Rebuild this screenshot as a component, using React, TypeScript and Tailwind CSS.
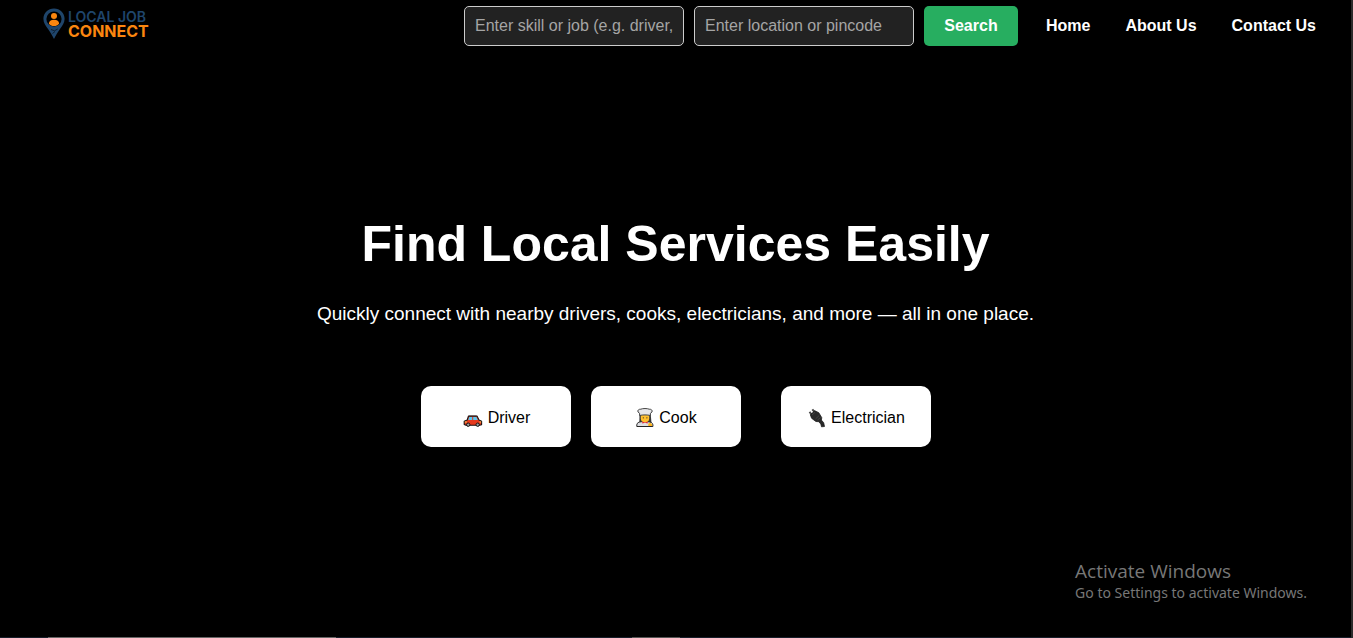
import type { ReactNode } from "react";

function PinMark() {
  return (
    <svg viewBox="0 0 22 32" className="h-8 w-[22px] shrink-0" aria-hidden="true">
      <path d="M11 0.500C5 .5.4 5 .4 10.800c0 4.200 2.300 7.200 4.800 10.400C7.300 24 9 27 11 31c2-4 3.700-7 5.800-9.800 2.500-3.200 4.800-6.200 4.800-10.400C21.600 5 17 .5 11 .5Z" fill="#1f456b" />
      <circle cx="11" cy="11" r="7.600" fill="#000" />
      <circle cx="11" cy="8" r="3" fill="#fb860f" />
      <path d="M5.900 15.800c0-2.800 2-4 5.100-4s5.100 1.200 5.100 4c-1.200 1.500-3 2.300-5.100 2.300s-3.900-.8-5.100-2.300Z" fill="#fb860f" />
      <path d="M8 21.500l3.500 1.300 3.200-1.800M9.500 25.500l2.500-2" fill="none" stroke="#0a1a2a" strokeWidth="0.9" />
    </svg>
  );
}

function CarIcon() {
  return (
    <svg viewBox="0 -7 20 20" className="size-5" aria-hidden="true">
      <path d="M5.500 1h8.500l2 4 2.600 1.200v3.600l-2 .5H3L1.200 9.500V6.200L4.200 5Z" fill="#e6391d" stroke="#1c1211" strokeWidth="1.100" strokeLinejoin="round" />
      <path d="M6.200 2h3v3H5.300ZM10.200 2h3.200l1.400 3h-4.600Z" fill="#5cc5ee" />
      <path d="M6 1.200h7.500" stroke="#3b2422" strokeWidth="1" />
      <path d="M1.800 7h2M16.500 7h1.700" stroke="#ffd35a" strokeWidth="1" />
      <circle cx="5.200" cy="9.700" r="1.700" fill="#9a9a9a" stroke="#151515" />
      <circle cx="14.700" cy="9.700" r="1.700" fill="#9a9a9a" stroke="#151515" />
    </svg>
  );
}

function CookIcon() {
  return (
    <svg viewBox="0 0 18 20" className="h-5 w-[18px]" aria-hidden="true">
      <path d="M3.500 6.500h11.200l.9 9H3.300Z" fill="#3a3a3a" />
      <path d="M.8 18.500v-1.600c0-2 2-3 4.700-3.200h6.500c2.800.2 4.900 1.200 4.900 3.200v1.600Z" fill="#dedee2" stroke="#242424" strokeWidth="1" />
      <path d="M4.800 6.500h8.400v4c0 2.400-1.900 4-4.200 4s-4.200-1.600-4.200-4Z" fill="#ffc02e" />
      <circle cx="7.300" cy="9.800" r=".6" fill="#392a16" />
      <circle cx="10.900" cy="9.800" r=".6" fill="#392a16" />
      <path d="M6.300 13.500l2.700.9 2.700-.9v1.900l-2.700-.6-2.700.6Z" fill="#e0263a" />
      <path d="M3.600 7.500V5.300L2 4C1.200 2.200 3 1 4.800 1.200 6.500.3 11.500.3 13.200 1.200c1.800-.2 3.600 1 2.800 2.800l-1.600 1.300v2.200c-3-.8-7.800-.8-10.800 0Z" fill="#e6e6e8" stroke="#333" strokeWidth=".9" strokeLinejoin="round" />
      <path d="M12.300 18v-2.500l1.800-.8 2 1.500V18Z" fill="#ffb61c" />
    </svg>
  );
}

function PlugIcon() {
  return (
    <svg viewBox="0 0 18 20" className="h-5 w-[18px]" aria-hidden="true">
      <path d="M1.500 3.800L4 7M4.300 1.300L7 4.500" stroke="#4d4d4d" strokeWidth="2" />
      <path d="M2.300 6.800L6.800 2.700l4 2 3 5-.4 2.400 2.300 2.600.8 3.800-3 .3-.7-2.800-2.100-2.300-2.800-.2-4.300-3.200Z" fill="#292929" stroke="#111" strokeWidth=".7" />
      <path d="M4 7L7 4.300M7.500 11l3.700-3.500M9.500 12l3-2.500" stroke="#555" strokeWidth=".6" />
    </svg>
  );
}

function ServiceButton({ icon, label }: { icon: ReactNode; label: string }) {
  return (
    <button type="button" className="flex h-[61px] w-[150px] items-center justify-center gap-[5px] rounded-[10px] bg-white pt-0.5 pl-0.5 text-base text-black">
      {icon}
      <span>{label}</span>
    </button>
  );
}

const links = ["Home", "About Us", "Contact Us"];
const field =
  "h-10 w-[220px] rounded-[5px] border border-[#ccc] bg-[#222] px-2.5 text-base text-white placeholder:text-[#a5a5a5]";

export default function App() {
  return (
    <div className="relative flex min-h-screen flex-col border-r-2 border-[#2b2b2b] bg-black font-['Liberation_Sans',Arial,sans-serif] text-white">
      <header className="flex items-start justify-between pt-1.5 pr-[35px] pb-1.5 pl-[43px]">
        <a href="#home" className="flex items-center gap-[3px] pt-0.5">
          <PinMark />
          <span className="flex flex-col font-['Inter',sans-serif]">
            <span className="text-sm leading-[15px] font-semibold text-[#1f456b]">LOCAL JOB</span>
            <span className="text-base leading-[15px] font-bold text-[#fb860f]">CONNECT</span>
          </span>
        </a>
        <div className="flex items-center gap-7">
          <form className="flex gap-2.5" onSubmit={(e) => e.preventDefault()}>
            <input type="text" aria-label="Skill or job" placeholder="Enter skill or job (e.g. driver, cook)" className={field} />
            <input type="text" aria-label="Location or pincode" placeholder="Enter location or pincode" className={field} />
            <button type="submit" className="h-10 w-[94px] rounded-[5px] bg-[#27ae60] text-base font-bold">
              Search
            </button>
          </form>
          <nav className="flex gap-[35px] font-bold">
            {links.map((l) => (
              <a key={l} href="#">
                {l}
              </a>
            ))}
          </nav>
        </div>
      </header>

      <main className="flex flex-1 flex-col items-center justify-center pb-7 text-center">
        <h1 className="text-[50px] leading-[60px] font-bold">Find Local Services Easily</h1>
        <p className="mt-6 text-[19px] leading-8">
          Quickly connect with nearby drivers, cooks, electricians, and more — all in one place.
        </p>
        <div className="mt-14 flex gap-5">
          <ServiceButton icon={<CarIcon />} label="Driver" />
          <ServiceButton icon={<CookIcon />} label="Cook" />
          <div className="pl-5">
            <ServiceButton icon={<PlugIcon />} label="Electrician" />
          </div>
        </div>
      </main>

      <aside className="absolute right-11 bottom-[35px] text-[#777]">
        <p className="font-['Open_Sans',sans-serif] text-[19px] leading-6">Activate Windows</p>
        <p className="font-['Noto_Sans',sans-serif] text-sm leading-5">Go to Settings to activate Windows.</p>
      </aside>

      <div className="flex h-px bg-[#171e2a] pl-12">
        <div className="w-72 bg-[#666]" />
        <div className="ml-[296px] w-12 bg-[#555]" />
      </div>
    </div>
  );
}
